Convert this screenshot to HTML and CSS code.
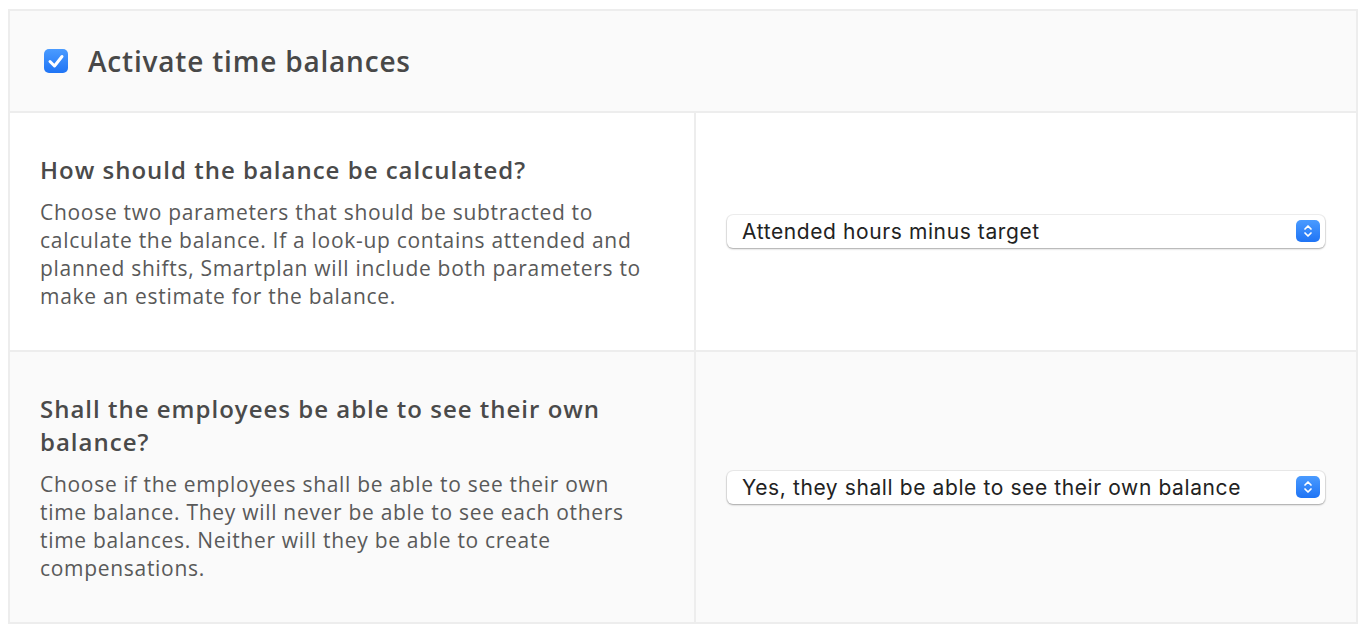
FILE: index.html
```html
<!DOCTYPE html>
<html lang="en">
<head>
    <meta charset="UTF-8">
    <meta name="viewport" content="width=device-width, initial-scale=1.0">
    <title>Time Balances</title>
    <link rel="stylesheet" href="styles.css">
</head>
<body>
    <div class="settings">
        <!-- Header -->
        <label class="settings-header">
            <span class="checkbox">
                <svg width="24" height="24" viewBox="0 0 24 24"><path d="M6 12.5 L10.5 17 L18 7.5" fill="none" stroke="#fff" stroke-width="3" stroke-linecap="round" stroke-linejoin="round"/></svg>
            </span>
            <span class="settings-title">Activate time balances</span>
        </label>

        <div class="settings-row">
            <div class="cell cell-text">
                <h2>How should the balance be calculated?</h2>
                <p>Choose two parameters that should be subtracted to calculate the balance. If a look-up contains attended and planned shifts, Smartplan will include both parameters to make an estimate for the balance.</p>
            </div>
            <div class="cell cell-control">
                <div class="select-wrap">
                    <select>
                        <option>Attended hours minus target</option>
                        <option>Planned hours minus target</option>
                    </select>
                    <span class="select-arrow">
                        <svg width="10" height="14" viewBox="0 0 10 14"><path d="M2 5 L5 2 L8 5 M2 9 L5 12 L8 9" fill="none" stroke="#fff" stroke-width="1.7" stroke-linecap="round" stroke-linejoin="round"/></svg>
                    </span>
                </div>
            </div>
        </div>

        <div class="settings-row alt">
            <div class="cell cell-text">
                <h2>Shall the employees be able to see their own balance?</h2>
                <p>Choose if the employees shall be able to see their own time balance. They will never be able to see each others time balances. Neither will they be able to create compensations.</p>
            </div>
            <div class="cell cell-control">
                <div class="select-wrap">
                    <select>
                        <option>Yes, they shall be able to see their own balance</option>
                        <option>No</option>
                    </select>
                    <span class="select-arrow">
                        <svg width="10" height="14" viewBox="0 0 10 14"><path d="M2 5 L5 2 L8 5 M2 9 L5 12 L8 9" fill="none" stroke="#fff" stroke-width="1.7" stroke-linecap="round" stroke-linejoin="round"/></svg>
                    </span>
                </div>
            </div>
        </div>
    </div>
</body>
</html>
```

FILE: styles.css
```css
body {
    font-family: "Open Sans", Arial, sans-serif;
    margin: 0;
    padding: 9px 10px 0 8px;
    background-color: #fff;
    color: #4a4a4a;
}

.settings {
    border: 2px solid #ededed;
}

.settings-header {
    display: flex;
    align-items: center;
    gap: 20px;
    height: 100px;
    padding: 0 34px;
    background-color: #fafafa;
    border-bottom: 2px solid #ededed;
}

.checkbox {
    display: flex;
    align-items: center;
    justify-content: center;
    width: 24px;
    height: 24px;
    border-radius: 5px;
    background: linear-gradient(#4a9bff, #1f74f5);
}

.settings-title {
    font-size: 28px;
    font-weight: 600;
    letter-spacing: 0.8px;
    color: #484848;
}

.settings-row {
    display: grid;
    grid-template-columns: 686px 1fr;
    background-color: #fff;
    border-bottom: 2px solid #ededed;
}

.settings-row:last-child {
    border-bottom: none;
}

.settings-row.alt {
    background-color: #fafafa;
}

.cell {
    padding: 40px 30px;
}

.cell-text {
    padding-right: 40px;
    border-right: 2px solid #ededed;
}

.cell-control {
    display: flex;
    align-items: center;
    padding: 0 31px;
}

h2 {
    margin: 0 0 12px;
    font-size: 24px;
    line-height: 33px;
    font-weight: 600;
    letter-spacing: 1px;
    color: #4a4a4a;
}

p {
    margin: 0;
    font-size: 21px;
    line-height: 28px;
    letter-spacing: 0.7px;
    color: #595959;
}

.select-wrap {
    position: relative;
    width: 100%;
}

select {
    appearance: none;
    -webkit-appearance: none;
    width: 100%;
    height: 33px;
    padding: 0 40px 0 15px;
    font-family: Inter, Arial, sans-serif;
    font-size: 21px;
    letter-spacing: 0.6px;
    color: #222;
    background: #fff;
    border: none;
    border-radius: 6px;
    box-shadow: 0 0 0 1px rgba(0, 0, 0, 0.06), 0 1px 2px rgba(0, 0, 0, 0.3);
}

.select-arrow {
    position: absolute;
    top: 5px;
    right: 5px;
    display: flex;
    align-items: center;
    justify-content: center;
    width: 24px;
    height: 22px;
    border-radius: 5px;
    background: linear-gradient(#4a9bff, #1f74f5);
    pointer-events: none;
}
```
